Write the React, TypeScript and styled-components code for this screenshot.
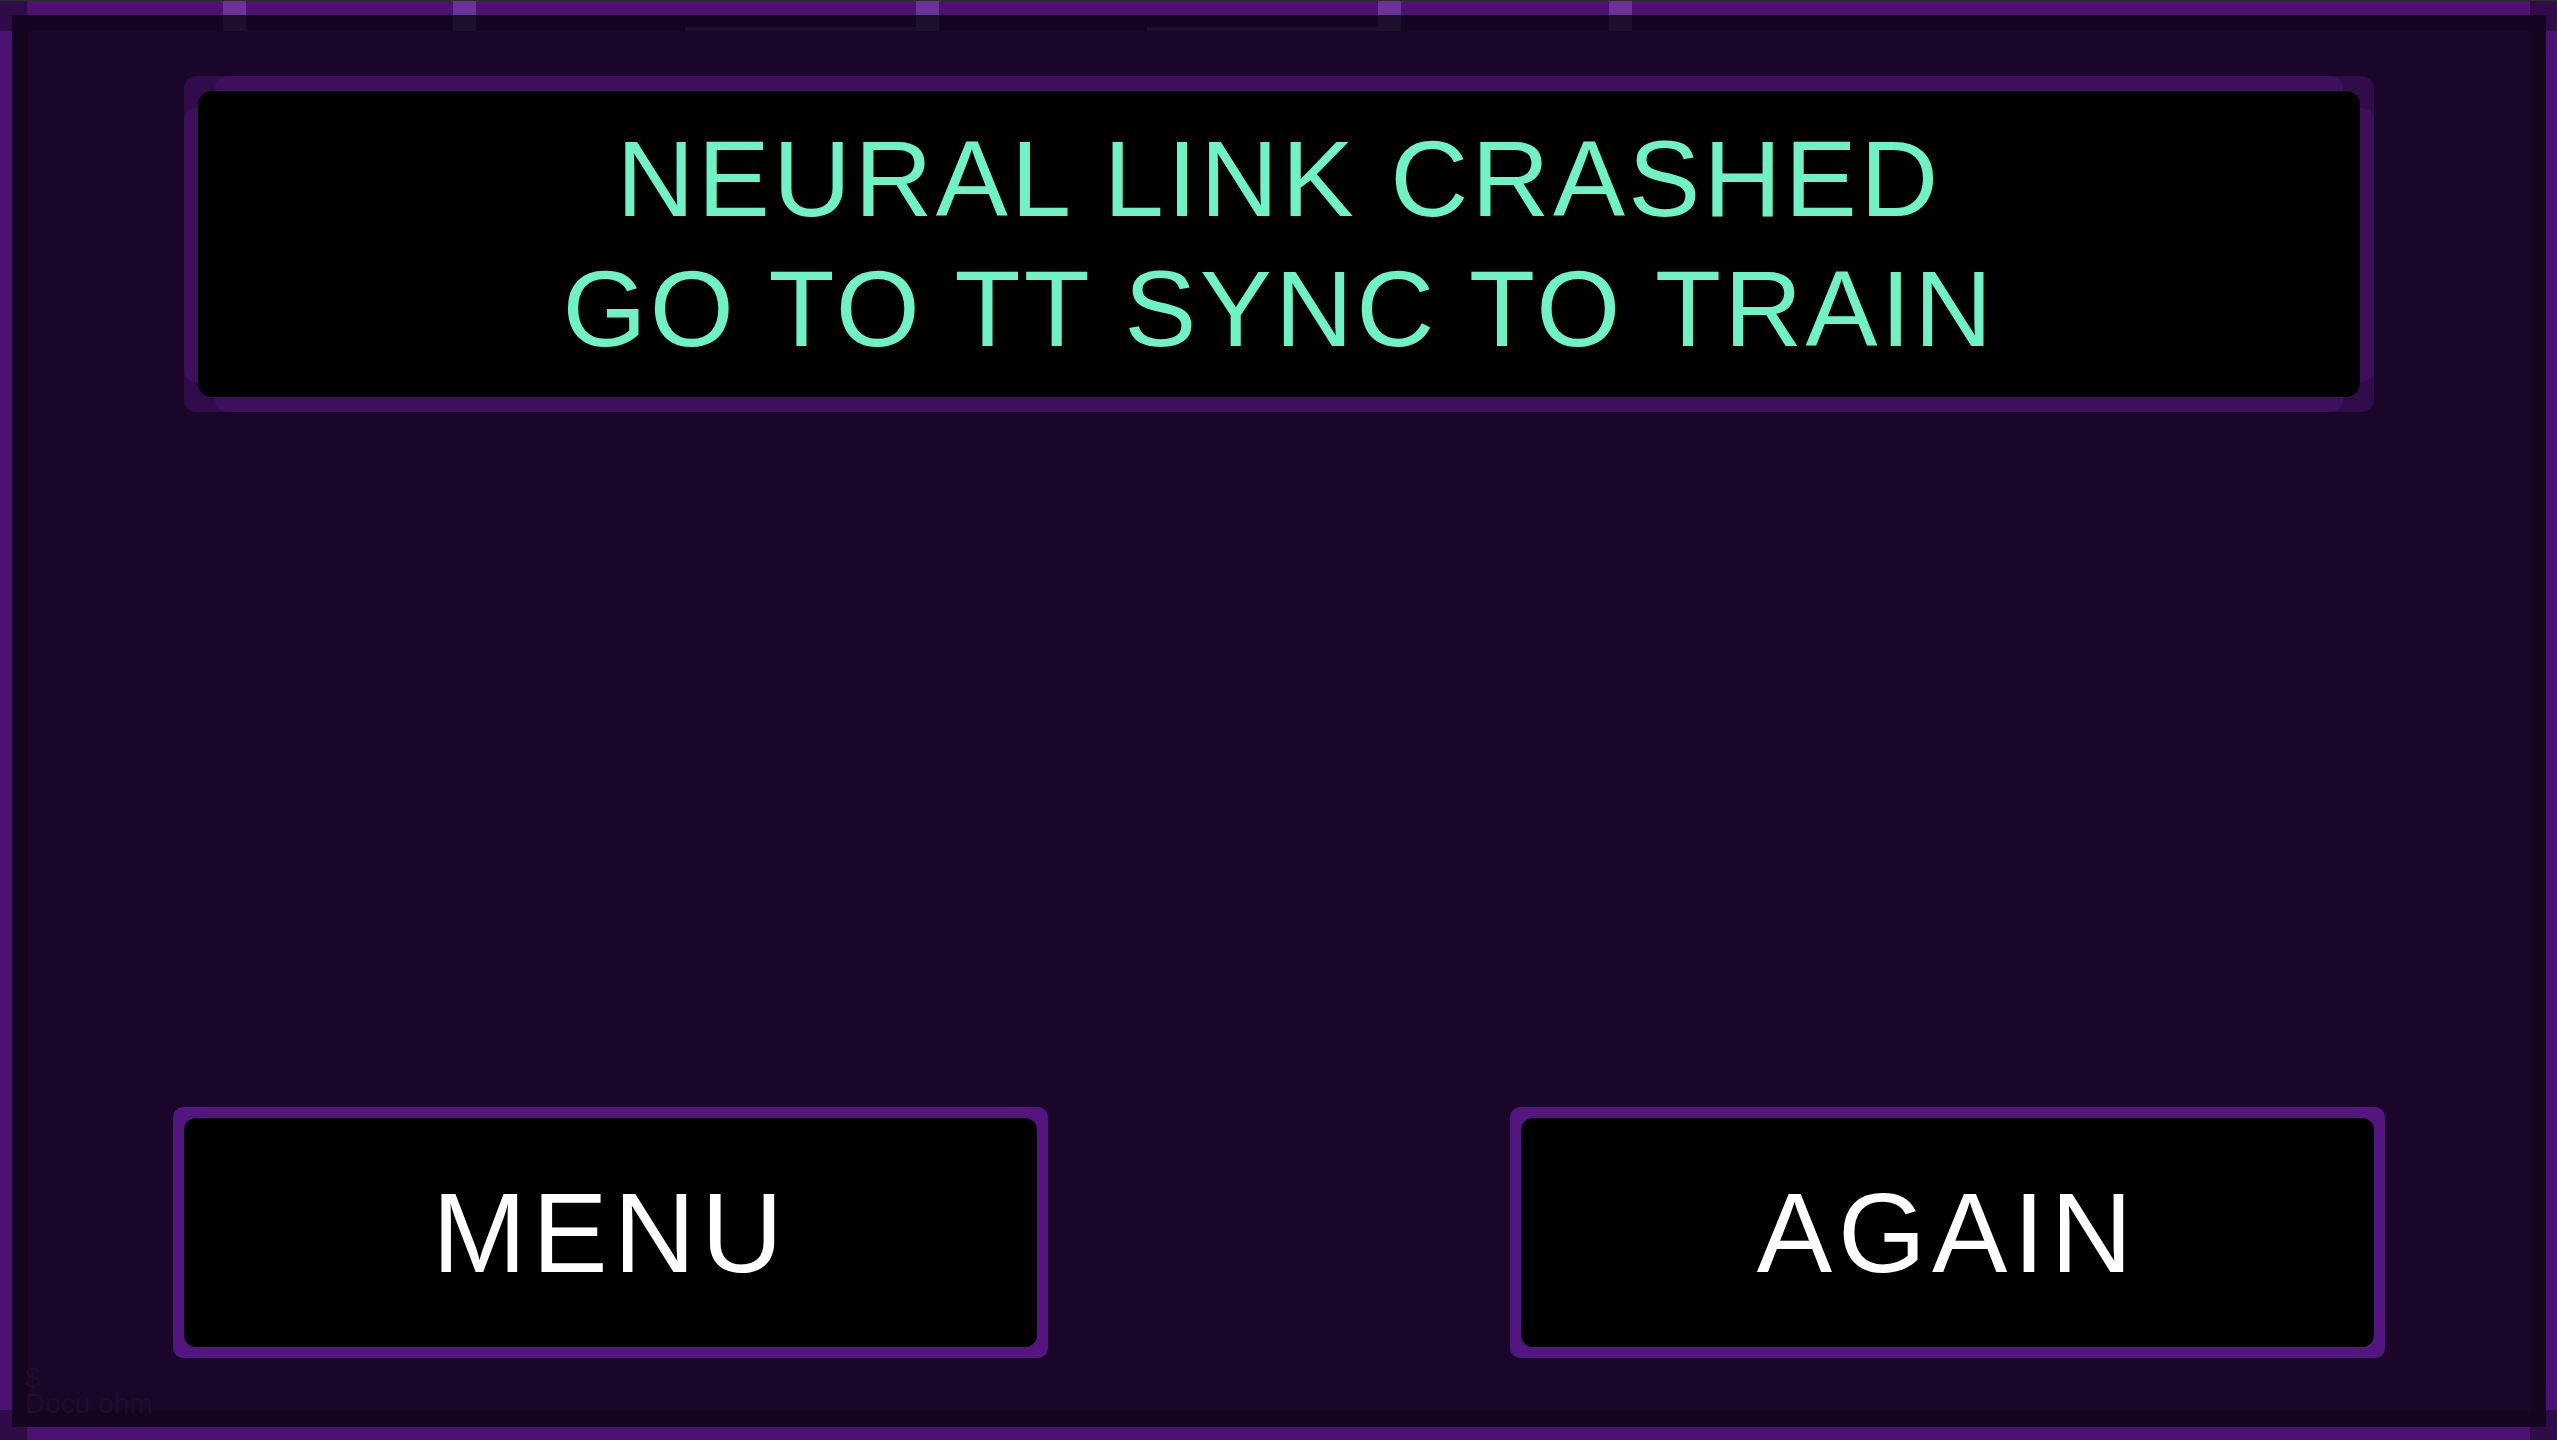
import React from 'react';
import styled, { createGlobalStyle } from 'styled-components';

const GlobalStyle = createGlobalStyle`
    html, body {
        margin: 0;
        padding: 0;
        background: #4b1272;
        overflow: hidden;
    }
    * {
        box-sizing: border-box;
    }
`;

const Frame = styled.div`
    position: relative;
    width: 2557px;
    height: 1440px;
    background: #4b1272;
    border-top: 1px solid #2b2b2b;
    padding: 14px 11px 13px 12px;
    display: flex;
    font-family: "Liberation Sans", Arial, sans-serif;
`;

const CornerBlock = styled.div<{ $side: 'tl' | 'tr' | 'bl' | 'br' }>`
    position: absolute;
    width: 27px;
    height: 30px;
    background: #2f0b48;
    ${({ $side }) => ($side[0] === 't' ? 'top: 0;' : 'bottom: 0;')}
    ${({ $side }) => ($side[1] === 'l' ? 'left: 0;' : 'right: 0;')}
`;

const Notch = styled.div<{ $x: number }>`
    position: absolute;
    top: 0;
    left: ${({ $x }) => $x}px;
    width: 23px;
    height: 30px;
    background: #6b3396;
    border-bottom: 16px solid #1d1029;
    z-index: 3;
`;

const Rail = styled.div<{ $x: number; $w: number }>`
    position: absolute;
    top: 26px;
    left: ${({ $x }) => $x}px;
    width: ${({ $w }) => $w}px;
    height: 4px;
    background: #1e0f2c;
    z-index: 3;
`;

const Screen = styled.div`
    position: relative;
    flex: 1;
    background: #190628;
    box-shadow: inset 0 0 0 16px #140520;
    display: flex;
    flex-direction: column;
    justify-content: space-between;
    padding: 61px 0 69px;
`;

const MessagePanel = styled.div`
    position: relative;
    margin: 0 172px;
    height: 336px;
    padding: 15px 14px;
    border-radius: 12px;
    background: #310c4b;

    &::before {
        content: '';
        position: absolute;
        top: 0;
        bottom: 0;
        left: 31px;
        right: 31px;
        border-top: 15px solid #3d0f5d;
        border-bottom: 15px solid #3d0f5d;
        border-radius: 12px;
    }
    &::after {
        content: '';
        position: absolute;
        top: 32px;
        bottom: 30px;
        left: 0;
        right: 0;
        border-left: 14px solid #3d0f5d;
        border-right: 14px solid #3d0f5d;
        border-radius: 12px;
    }
`;

const MessageScreen = styled.div`
    position: relative;
    z-index: 1;
    height: 100%;
    background: #000;
    border-radius: 14px;
    display: flex;
    flex-direction: column;
    align-items: center;
    justify-content: center;
    color: #6ff2c6;
    font-size: 108px;
    line-height: 130px;
    letter-spacing: 3.3px;
`;

const ButtonRow = styled.div`
    display: flex;
    justify-content: space-between;
    padding: 0 161px;
`;

const ActionButton = styled.button`
    position: relative;
    width: 875px;
    height: 251px;
    padding: 11px;
    border: none;
    border-radius: 10px;
    background: #53167f;
    cursor: pointer;
    font-family: inherit;
`;

const ButtonFace = styled.span`
    position: relative;
    z-index: 1;
    display: flex;
    align-items: center;
    justify-content: center;
    width: 100%;
    height: 100%;
    background: #000;
    border-radius: 12px;
    color: #ffffff;
    font-size: 113px;
    letter-spacing: 6px;
    padding-top: 1px;
`;

const FaintLabel = styled.div`
    position: absolute;
    left: 13px;
    bottom: 10px;
    font-size: 28px;
    line-height: 26px;
    color: #1e0e2c;
`;

const App = () => {
    const notches = [223, 453, 916, 1378, 1609];

    return (
        <>
            <GlobalStyle />
            <Frame>
                <CornerBlock $side="tl" />
                <CornerBlock $side="tr" />
                <CornerBlock $side="bl" />
                <CornerBlock $side="br" />
                {notches.map((x) => (
                    <Notch key={x} $x={x} />
                ))}
                <Rail $x={685} $w={231} />
                <Rail $x={1147} $w={231} />
                <Screen>
                    <MessagePanel>
                        <MessageScreen>
                            <div>NEURAL LINK CRASHED</div>
                            <div>GO TO TT SYNC TO TRAIN</div>
                        </MessageScreen>
                    </MessagePanel>
                    <ButtonRow>
                        <ActionButton>
                            <ButtonFace>MENU</ButtonFace>
                        </ActionButton>
                        <ActionButton>
                            <ButtonFace>AGAIN</ButtonFace>
                        </ActionButton>
                    </ButtonRow>
                    <FaintLabel>$<br />Docu ohm</FaintLabel>
                </Screen>
            </Frame>
        </>
    );
};

export default App;
